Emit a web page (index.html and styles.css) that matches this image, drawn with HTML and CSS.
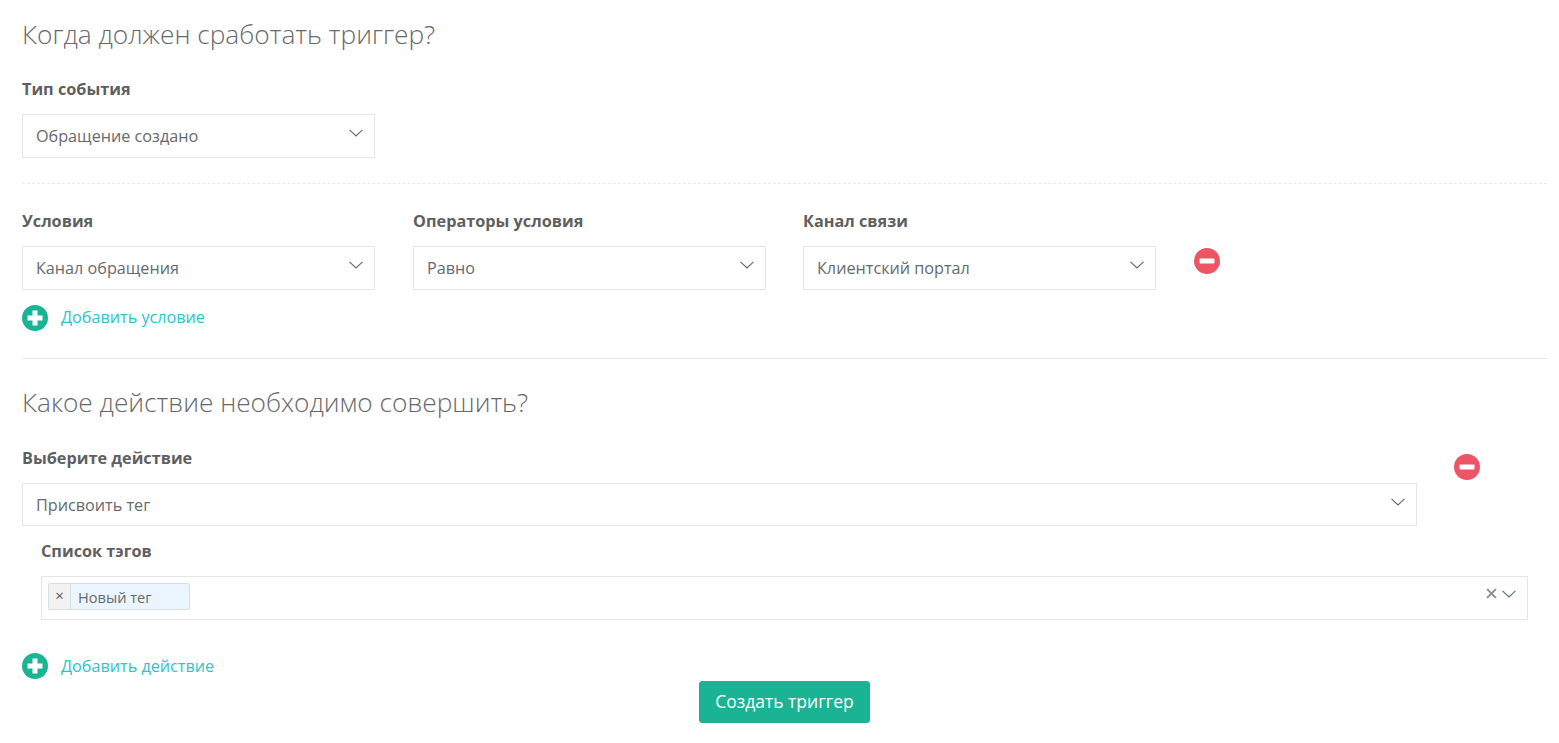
FILE: index.html
```html
<!DOCTYPE html>
<html lang="ru">
<head>
<meta charset="utf-8">
<title>Триггер</title>
<link rel="stylesheet" href="styles.css">
</head>
<body>
<main class="page">
  <h2 class="title">Когда должен сработать триггер?</h2>
  <div class="field event">
    <div class="label">Тип события</div>
    <div class="select"><span>Обращение создано</span><svg class="chev" viewBox="0 0 14 8"><path d="M.5.8 7 7 13.500.8"/></svg></div>
  </div>
  <hr class="dashed">
  <div class="conds">
    <div class="field">
      <div class="label">Условия</div>
      <div class="select"><span>Канал обращения</span><svg class="chev" viewBox="0 0 14 8"><path d="M.5.8 7 7 13.500.8"/></svg></div>
    </div>
    <div class="field">
      <div class="label">Операторы условия</div>
      <div class="select"><span>Равно</span><svg class="chev" viewBox="0 0 14 8"><path d="M.5.8 7 7 13.500.8"/></svg></div>
    </div>
    <div class="field third">
      <div class="label">Канал связи</div>
      <div class="select"><span>Клиентский портал</span><svg class="chev" viewBox="0 0 14 8"><path d="M.5.8 7 7 13.500.8"/></svg></div>
    </div>
    <svg class="minus cond-minus" viewBox="0 0 26 26"><circle cx="13" cy="13" r="13"/><rect x="5.500" y="10.500" width="15" height="5" rx="1"/></svg>
  </div>
  <a class="add add-cond"><svg class="plus" viewBox="0 0 26 26"><circle cx="13" cy="13" r="13"/><path d="M10.500 5.500h5v5h5v5h-5v5h-5v-5h-5v-5h5z"/></svg><span>Добавить условие</span></a>
  <hr class="solid">
  <h2 class="title second">Какое действие необходимо совершить?</h2>
  <div class="action">
    <div class="field wide">
      <div class="label">Выберите действие</div>
      <div class="select low"><span>Присвоить тег</span><svg class="chev" viewBox="0 0 14 8"><path d="M.5.8 7 7 13.500.8"/></svg></div>
    </div>
    <svg class="minus act-minus" viewBox="0 0 26 26"><circle cx="13" cy="13" r="13"/><rect x="5.500" y="10.500" width="15" height="5" rx="1"/></svg>
  </div>
  <div class="tags">
    <div class="label">Список тэгов</div>
    <div class="multi">
      <div class="tag"><span class="tag-x">×</span><span class="tag-text">Новый тег</span></div>
      <div class="multi-icons">
        <svg class="clear" viewBox="0 0 10 10"><path d="M1 1l8 8M9 1 1 9"/></svg>
        <svg class="chev" viewBox="0 0 14 8"><path d="M.5.8 7 7 13.500.8"/></svg>
      </div>
    </div>
  </div>
  <a class="add add-act"><svg class="plus" viewBox="0 0 26 26"><circle cx="13" cy="13" r="13"/><path d="M10.500 5.500h5v5h5v5h-5v5h-5v-5h-5v-5h5z"/></svg><span>Добавить действие</span></a>
  <div class="submit"><button class="btn" type="button">Создать триггер</button></div>
</main>
</body>
</html>
```

FILE: styles.css
```css
* { box-sizing: border-box; }
html, body { margin: 0; padding: 0; background: #fff; }
body { font-family: "Open Sans", "Noto Sans", sans-serif; color: #676a6c; font-size: 16px; overflow: hidden; }
.page { padding: 15px 12px 0 22px; height: 743px; }
.title { margin: 0; font-size: 26.250px; line-height: 38px; font-weight: 300; color: #676a6c; }
.label { font-weight: 700; font-size: 16.250px; line-height: 20px; color: #5f5f5f; }
.event { margin-top: 26px; width: 353px; }
.select { margin-top: 15px; height: 44px; border: 1px solid #e5e6e7; padding: 0 11px 0 13px; display: flex; justify-content: space-between; background: #fff; }
.select span { line-height: 43px; font-size: 16.200px; }
.select.low { height: 43px; }
.chev { width: 14px; height: 8px; margin: 14px 0 0; fill: none; stroke: #5b6b73; stroke-width: 1.100; }
.dashed { border: 0; border-top: 1px dashed #e7eaec; margin: 25px 0 0; }
.conds { display: flex; gap: 38px; margin-top: 27px; }
.conds .field { width: 353px; }
.conds .third { margin-left: -1px; }
.minus { width: 26px; height: 26px; flex: none; }
.minus circle { fill: #ed5565; }
.minus rect { fill: #fff; }
.cond-minus { margin-top: 37px; }
.plus { width: 26px; height: 26px; flex: none; }
.plus circle { fill: #1ab394; }
.plus path { fill: #fff; }
.add { display: flex; align-items: center; gap: 13px; color: #2cc4c8; font-size: 16.200px; line-height: 24px; height: 26px; }
.add-cond span { margin-bottom: 2px; }
.add-cond { margin-top: 15px; }
.solid { border: 0; border-top: 1px solid #e7eaec; margin: 27px 0 0; }
.second { margin-top: 24px; }
.action { display: flex; gap: 37px; margin-top: 27px; }
.wide { width: 1395px; }
.act-minus { margin-top: 6px; }
.tags { margin: 15px 19px 0; }
.multi { margin-top: 15px; height: 44px; border: 1px solid #e5e6e7; padding: 6px 6px; display: flex; justify-content: space-between; }
.tag { display: flex; width: 142px; height: 27px; border: 1px solid #d6dde3; border-radius: 2px; background: #ebf5ff; overflow: hidden; }
.tag-x { width: 22px; background: #f2f2f2; border-right: 1px solid #d6dde3; text-align: center; font-size: 15px; line-height: 22px; color: #555; }
.tag-text { padding-left: 7px; font-size: 14.600px; line-height: 26px; }
.multi-icons { display: flex; gap: 5px; padding: 0 5px 0 0; }
.clear { width: 11px; height: 11px; margin-top: 5px; fill: none; stroke: #8a9095; stroke-width: 1.800; }
.multi-icons .chev { margin-top: 7px; }
.add-act { margin-top: 33px; }
.submit { display: flex; justify-content: center; margin-top: 2px; }
.btn { width: 171px; height: 42px; border: 1px solid #1ab394; border-radius: 3px; background: #1ab394; color: #fff; font-family: inherit; font-size: 17.500px; line-height: 36px; padding: 0 0 3px; }
```
